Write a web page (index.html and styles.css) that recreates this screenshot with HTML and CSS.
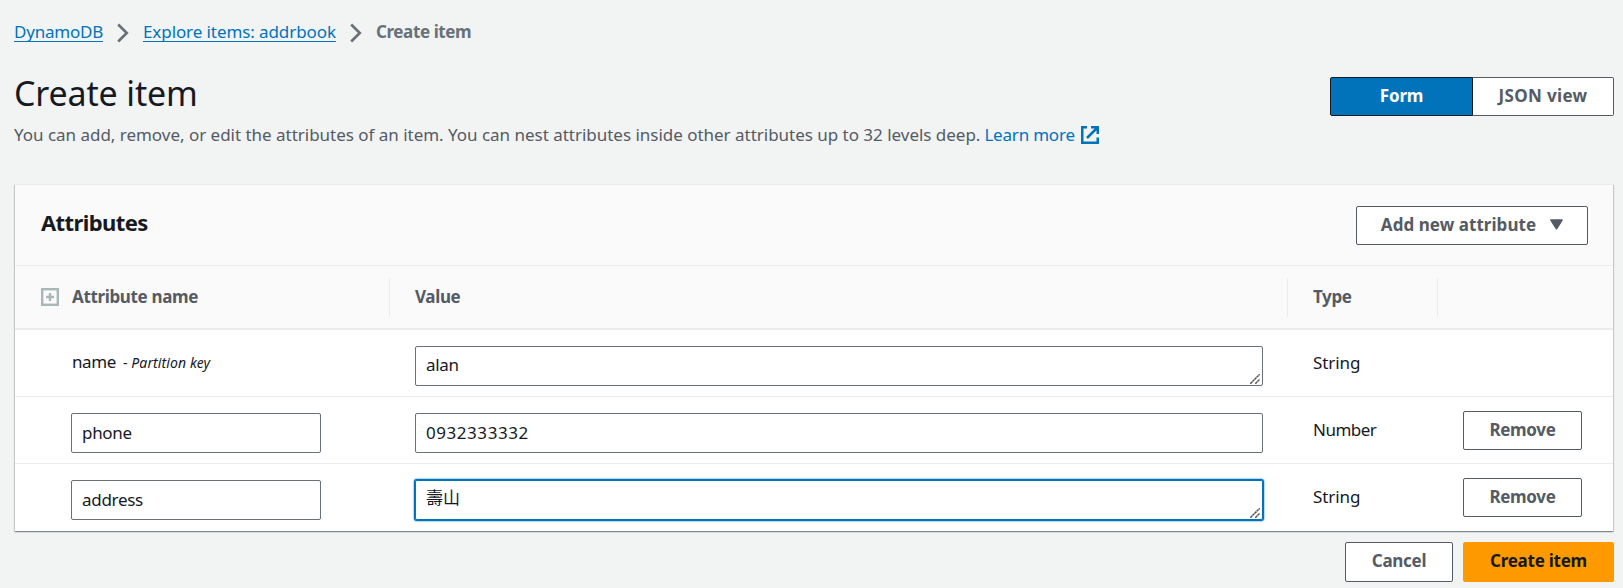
FILE: index.html
```
<!DOCTYPE html>
<html lang="en">
<head>
<meta charset="utf-8">
<title>Create item - DynamoDB</title>
<link rel="stylesheet" href="styles.css">
</head>
<body>
<nav class="breadcrumb">
  <a class="crumb crumb-db" href="#">DynamoDB</a>
  <svg class="chevron" width="12" height="20" viewBox="0 0 12 20"><path d="M1.2 1.5 9.8 10 1.2 18.5" fill="none" stroke="#687078" stroke-width="2.6"/></svg>
  <a class="crumb crumb-items" href="#">Explore items: addrbook</a>
  <svg class="chevron" width="12" height="20" viewBox="0 0 12 20"><path d="M1.2 1.5 9.8 10 1.2 18.5" fill="none" stroke="#687078" stroke-width="2.6"/></svg>
  <span class="current">Create item</span>
</nav>

<header class="page-header">
  <div>
    <h1 class="title">Create item</h1>
    <p class="description"><span>You can add, remove, or edit the attributes of an item. You can nest attributes inside other attributes up to 32 levels deep.</span>
      <a class="learn" href="#">Learn more</a>
      <svg width="18" height="18" viewBox="0 0 18 18" fill="none" stroke="#0073bb" stroke-width="2.5"><path d="M6 1.25H1.25v15.5h15.5V11.5"/><path d="M10 1.25h6.75V8M16.5 1.5 6 12"/></svg>
    </p>
  </div>
  <div class="segmented">
    <button class="segment selected">Form</button>
    <button class="segment view">JSON view</button>
  </div>
</header>

<section class="panel">
  <div class="panel-header">
    <h2 class="panel-title">Attributes</h2>
    <button class="button add">Add new attribute
      <svg width="13" height="11" viewBox="0 0 13 11"><path d="M1 1h11L6.5 9.7z" fill="#545b64" stroke="#545b64" stroke-width="1.6" stroke-linejoin="round"/></svg>
    </button>
  </div>
  <div class="row head">
    <div class="cell name-cell">
      <svg class="expand" width="18" height="18" viewBox="0 0 18 18" fill="none" stroke="#aab7b8"><rect x="1.2" y="1.2" width="15.6" height="15.6" stroke-width="2.4"/><path d="M9 5v8M5 9h8" stroke-width="2.4"/></svg>
      <span class="head-name">Attribute name</span>
    </div>
    <div class="cell">Value</div>
    <div class="cell">Type</div>
    <div class="cell"></div>
  </div>
  <div class="row">
    <div class="cell name-cell key"><span>name</span><small class="hint">- <i>Partition key</i></small></div>
    <div class="cell value"><div class="field area">alan<svg class="grip" width="10" height="10" viewBox="0 0 10 10"><path d="M.3 9.7 9.7.3M5.3 9.7 9.7 5.3" stroke="#555" stroke-width="1.5" stroke-dasharray="2.6 .4"/></svg></div></div>
    <div class="cell type">String</div>
    <div class="cell"></div>
  </div>
  <div class="row">
    <div class="cell name-cell"><div class="field">phone</div></div>
    <div class="cell value"><div class="field digits">0932333332</div></div>
    <div class="cell type number">Number</div>
    <div class="cell action"><button class="button remove">Remove</button></div>
  </div>
  <div class="row last">
    <div class="cell name-cell"><div class="field">address</div></div>
    <div class="cell value"><div class="field area focused"><span class="cjk">壽山</span><svg class="grip" width="10" height="10" viewBox="0 0 10 10"><path d="M.3 9.7 9.7.3M5.3 9.7 9.7 5.3" stroke="#555" stroke-width="1.5" stroke-dasharray="2.6 .4"/></svg></div></div>
    <div class="cell type">String</div>
    <div class="cell action"><button class="button remove">Remove</button></div>
  </div>
</section>

<footer class="actions">
  <button class="button cancel">Cancel</button>
  <button class="button primary">Create item</button>
</footer>
</body>
</html>
```
FILE: styles.css
```
* { box-sizing: border-box; }

body {
  margin: 0;
  padding: 20px 9px 0 14px;
  height: 588px;
  overflow: hidden;
  background: #f2f3f3;
  color: #16191f;
  font: 17px/24px "Noto Sans", "Noto Sans CJK TC", sans-serif;
}

h1, h2, p { margin: 0; }
svg { display: block; flex: none; }

.breadcrumb {
  display: flex;
  height: 53px;
}
.crumb {
  color: #0073bb;
  text-decoration: underline 1px;
  text-underline-offset: 3px;
  text-decoration-skip-ink: none;
}
.crumb-db { width: 89px; letter-spacing: -.22px; }
.crumb-items { width: 193px; letter-spacing: -.09px; }
.chevron { margin: 3px 14px 0; }
.current { color: #687078; font-weight: 700; letter-spacing: -.4px; }

.page-header {
  display: flex;
  justify-content: space-between;
  height: 112px;
}
.title {
  font-size: 34px;
  line-height: 40px;
  font-weight: 400;
  letter-spacing: -.15px;
}
.description {
  display: flex;
  margin-top: 10px;
  color: #545b64;
  letter-spacing: -.02px;
  white-space: nowrap;
}
.learn {
  margin: 0 6px 0 4px;
  color: #0073bb;
  text-decoration: none;
  letter-spacing: -.2px;
}
.description svg { margin-top: 3px; }

.segmented { display: flex; margin-top: 4px; }
.segment {
  height: 39px;
  padding: 0 0 2px;
  border: 1px solid #545b64;
  background: #fff;
  color: #545b64;
  font: 700 17px/24px "Noto Sans", sans-serif;
}
.selected {
  width: 143px;
  border-color: #16191f;
  border-radius: 2px 0 0 2px;
  background: #0073bb;
  color: #fff;
  letter-spacing: -.2px;
}
.view {
  width: 141px;
  border-left: 0;
  border-radius: 0 2px 2px 0;
  letter-spacing: .35px;
}

.panel {
  margin: -1px 0 0 1px;
  width: 1598px;
  height: 347px;
  background: #fff;
  border-top: 1px solid #eaeded;
  box-shadow: 0 1px 1px 0 rgba(0, 28, 36, .3), 1px 1px 1px 0 rgba(0, 28, 36, .15), -1px 1px 1px 0 rgba(0, 28, 36, .15);
}
.panel-header {
  display: flex;
  justify-content: space-between;
  height: 81px;
  padding: 21px 25px 0 26px;
  border-bottom: 1px solid #eaeded;
  background: #fafafa;
}
.panel-title {
  margin-top: 3px;
  font-size: 22px;
  line-height: 26px;
  font-weight: 700;
  letter-spacing: -.6px;
}

.button {
  display: flex;
  align-items: center;
  justify-content: center;
  height: 39px;
  padding: 0 0 2px;
  border: 1px solid #545b64;
  border-radius: 2px;
  background: #fff;
  color: #545b64;
  font: 700 17px/24px "Noto Sans", sans-serif;
}
.add { width: 232px; gap: 14px; letter-spacing: .05px; }
.remove { width: 119px; letter-spacing: -.3px; }
.cancel { width: 108px; height: 40px; letter-spacing: -.3px; }
.primary {
  width: 151px;
  height: 40px;
  border-color: #ff9900;
  background: #ff9900;
  color: #16191f;
  letter-spacing: -.25px;
}

.row {
  display: grid;
  grid-template-columns: 374px 898px 150px 176px;
  height: 67px;
  border-bottom: 1px solid #eaeded;
}
.last { border-bottom: 0; }
.cell { padding: 16px 24px 0 25px; }
.name-cell { padding-left: 56px; }
.value { padding-left: 26px; padding-right: 24px; }

.head {
  height: 64px;
  border-bottom-width: 2px;
  background: #fafafa;
  color: #545b64;
  font-weight: 700;
  align-items: center;
}
.head .cell {
  display: flex;
  align-items: center;
  height: 39px;
  padding-top: 0;
  border-left: 1px solid #eaeded;
  letter-spacing: -.35px;
}
.head .name-cell { padding-left: 26px; border-left: 0; }
.expand { margin-right: 13px; }

.field {
  position: relative;
  height: 40px;
  padding: 7px 10px 0;
  border: 1px solid #687078;
  border-radius: 2px;
  letter-spacing: -.3px;
}
.name-cell .field { width: 250px; }
.area { padding-top: 6px; }
.digits { letter-spacing: .55px; }
.focused {
  padding-top: 5px;
  border-color: #0073bb;
  box-shadow: 0 0 0 1px #0073bb, 0 0 2px 1px #0073bb;
}
.cjk { font: 400 17px/22px "Noto Sans CJK TC", sans-serif; letter-spacing: 0; }
.grip { position: absolute; right: 2px; bottom: 1px; }

.key { display: flex; padding-top: 20px; padding-left: 57px; letter-spacing: -.4px; }
.hint { margin-left: 7px; font-size: 14px; line-height: 26px; letter-spacing: .1px; }
.type { padding-top: 21px; padding-left: 26px; letter-spacing: -.1px; }
.number { letter-spacing: -.5px; }
.action { padding: 14px 0 0 26px; }

.actions {
  display: flex;
  justify-content: flex-end;
  gap: 10px;
  margin-top: 11px;
}
```
